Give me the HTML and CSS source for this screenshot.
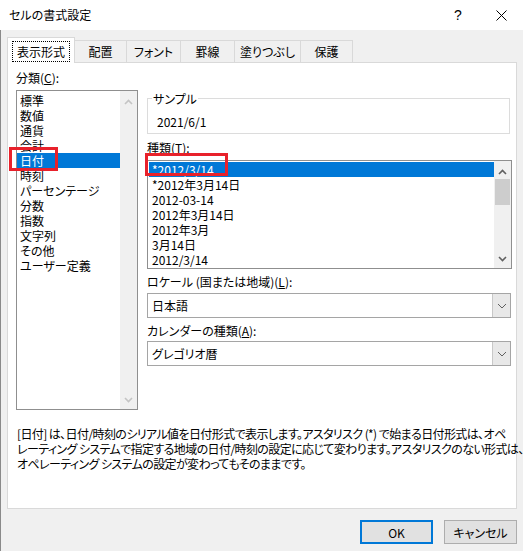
FILE: index.html
```html
<!DOCTYPE html>
<html lang="ja">
<head>
  <meta charset="UTF-8">
  <meta name="viewport" content="width=device-width, initial-scale=1.0">
  <title>セルの書式設定</title>
  <link rel="stylesheet" href="styles.css">
</head>
<body>
  <div class="titlebar">
    <span class="title">セルの書式設定</span>
    <span class="caption-btn help">?</span>
    <span class="caption-btn close">
      <svg width="11" height="11" viewBox="0 0 11 11"><path d="M0.5 0.5 L10.5 10.5 M10.5 0.5 L0.5 10.5" stroke="#000" stroke-width="1" fill="none"/></svg>
    </span>
  </div>

  <div class="dialog">
    <div class="tabs">
      <div class="tab active" style="width: 68px"><span class="focus">表示形式</span></div>
      <div class="tab" style="width: 53px">配置</div>
      <div class="tab" style="width: 55px">フォント</div>
      <div class="tab" style="width: 55px">罫線</div>
      <div class="tab" style="width: 67px">塗りつぶし</div>
      <div class="tab" style="width: 53px">保護</div>
    </div>

    <div class="panel">
      <div class="columns">
        <div class="col-left">
          <div class="label">分類(<u>C</u>):</div>
          <div class="listbox category">
            <ul class="items">
              <li>標準</li>
              <li>数値</li>
              <li>通貨</li>
              <li>会計</li>
              <li class="selected marked">日付</li>
              <li>時刻</li>
              <li>パーセンテージ</li>
              <li>分数</li>
              <li>指数</li>
              <li>文字列</li>
              <li>その他</li>
              <li>ユーザー定義</li>
            </ul>
            <div class="scrollbar disabled">
              <svg class="arrow" width="17" height="18" viewBox="0 0 17 18"><path d="M5 13 L8.5 9.5 L12 13" /></svg>
              <svg class="arrow" width="17" height="18" viewBox="0 0 17 18"><path d="M5 7 L8.5 10.5 L12 7" /></svg>
            </div>
          </div>
        </div>

        <div class="col-right">
          <fieldset class="sample">
            <legend>サンプル</legend>
            <div class="sample-value">2021/6/1</div>
          </fieldset>

          <div class="label type-label">種類(<u>T</u>):</div>
          <div class="listbox formats">
            <ul class="items">
              <li class="selected marked">*2012/3/14</li>
              <li>*2012年3月14日</li>
              <li>2012-03-14</li>
              <li>2012年3月14日</li>
              <li>2012年3月</li>
              <li>3月14日</li>
              <li>2012/3/14</li>
            </ul>
            <div class="scrollbar">
              <svg class="arrow" width="17" height="18" viewBox="0 0 17 18"><path d="M5 13 L8.5 9.5 L12 13" /></svg>
              <div class="thumb"></div>
              <div class="track"></div>
              <svg class="arrow" width="17" height="18" viewBox="0 0 17 18"><path d="M5 7 L8.5 10.5 L12 7" /></svg>
            </div>
          </div>

          <div class="label field-label">ロケール (国または地域)(<u>L</u>):</div>
          <div class="combo">
            <span class="combo-text">日本語</span>
            <span class="combo-btn">
              <svg width="10" height="6" viewBox="0 0 10 6"><path d="M1 1 L5 5 L9 1" /></svg>
            </span>
          </div>

          <div class="label field-label">カレンダーの種類(<u>A</u>):</div>
          <div class="combo">
            <span class="combo-text">グレゴリオ暦</span>
            <span class="combo-btn">
              <svg width="10" height="6" viewBox="0 0 10 6"><path d="M1 1 L5 5 L9 1" /></svg>
            </span>
          </div>
        </div>
      </div>

      <p class="desc">[日付] は、日付/時刻のシリアル値を日付形式で表示します。アスタリスク (*) で始まる日付形式は、オペ<br>レーティング システムで指定する地域の日付/時刻の設定に応じて変わります。アスタリスクのない形式は、<br>オペレーティング システムの設定が変わってもそのままです。</p>
    </div>

    <div class="buttons">
      <button class="btn default">OK</button>
      <button class="btn">キャンセル</button>
    </div>
  </div>
</body>
</html>
```

FILE: styles.css
```css
body {
  margin: 0;
  width: 523px;
  height: 551px;
  overflow: hidden;
  background-color: #f0f0f0;
  font-family: "Noto Sans CJK JP", sans-serif;
  font-size: 12px;
  font-feature-settings: "palt";
  color: #000000;
}

.titlebar {
  height: 30px;
  background-color: #ffffff;
  display: flex;
  align-items: center;
  padding-left: 9px;
}

.title {
  flex: 1;
  line-height: 30px;
}

.caption-btn {
  width: 44px;
  height: 30px;
  display: flex;
  justify-content: center;
  align-items: center;
}

.help {
  font-family: "Liberation Sans", sans-serif;
  font-size: 14px;
}

.close {
  width: 43px;
}

.dialog {
  height: 521px;
  box-sizing: border-box;
  border-left: 1px solid #8a8a8a;
  padding: 7px 6px 0 6px;
}

/* tab strip */
.tabs {
  display: flex;
  align-items: flex-end;
  height: 25px;
}

.tab {
  height: 22px;
  box-sizing: border-box;
  border: 1px solid #d9d9d9;
  border-bottom: none;
  margin-left: -1px;
  display: flex;
  justify-content: center;
  align-items: center;
  background-color: #f0f0f0;
  line-height: 15px;
}

.tab.active {
  margin-left: 0;
  height: 26px;
  margin-bottom: -1px;
  background-color: #ffffff;
  position: relative;
  z-index: 2;
}

.focus {
  display: block;
  border: 1px dotted #000000;
  padding: 2px 4px;
  margin-top: 1px;
}

.panel {
  height: 447px;
  box-sizing: border-box;
  border: 1px solid #d9d9d9;
  background-color: #ffffff;
}

.columns {
  display: flex;
  gap: 9px;
  padding: 7px 0 0 8px;
}

.col-left {
  width: 122px;
}

.col-right {
  width: 365px;
  padding-top: 21px;
  display: flex;
  flex-direction: column;
}

.label {
  line-height: 15px;
  height: 15px;
  white-space: nowrap;
}

/* list boxes */
.listbox {
  display: flex;
  box-sizing: border-box;
  border: 1px solid #8f8f8f;
  background-color: #ffffff;
}

.category {
  margin-top: 5px;
  height: 320px;
}

.formats {
  margin-top: 5px;
  height: 109px;
}

.items {
  flex: 1;
  list-style: none;
  margin: 0;
  padding: 2px 0 0 0;
}

.formats .items {
  padding: 1px 0 0 1px;
}

.items li {
  height: 15px;
  line-height: 15px;
  padding-left: 3px;
  white-space: nowrap;
}

.items li.selected {
  background-color: #0078d7;
  color: #ffffff;
}

.items li.marked {
  position: relative;
}

.items li.marked::after {
  content: "";
  position: absolute;
  box-sizing: border-box;
  border: 3px solid #e8212b;
}

.category li.marked::after {
  left: -8px;
  top: -6px;
  width: 49px;
  height: 24px;
}

.formats li.marked::after {
  left: -4px;
  top: -9px;
  width: 83px;
  height: 23px;
}

.scrollbar {
  width: 17px;
  background-color: #f0f0f0;
  display: flex;
  flex-direction: column;
  justify-content: space-between;
}

.arrow path {
  fill: none;
  stroke: #606060;
  stroke-width: 1.6;
}

.scrollbar.disabled .arrow path {
  stroke: #c4c4c4;
}

.thumb {
  height: 26px;
  margin: 0 1px;
  background-color: #cdcdcd;
}

.track {
  flex: 1;
}

/* sample box */
.sample {
  margin: 0;
  padding: 0 9px 4px 9px;
  width: 363px;
  box-sizing: border-box;
  border: 1px solid #dcdcdc;
}

.sample legend {
  padding: 0 1px;
  margin-left: -5px;
  line-height: 15px;
}

.sample-value {
  margin-top: 8px;
  line-height: 15px;
}

.type-label {
  margin-top: 6px;
}

.field-label {
  margin-top: 5px;
}

/* drop-down boxes */
.combo {
  margin-top: 4px;
  height: 25px;
  width: 364px;
  box-sizing: border-box;
  border: 1px solid #a5a5a5;
  display: flex;
  background-color: #ffffff;
}

.field-label + .combo + .field-label + .combo {
  margin-top: 3px;
}

.combo-text {
  flex: 1;
  line-height: 23px;
  padding-left: 4px;
}

.combo-btn {
  width: 17px;
  border-left: 1px solid #c8c8c8;
  background-color: #e8e8e8;
  display: flex;
  justify-content: center;
  align-items: center;
}

.combo-btn path {
  fill: none;
  stroke: #606060;
  stroke-width: 1;
}

.desc {
  margin: 16px 0 0 9px;
  line-height: 15px;
  letter-spacing: -0.6px;
  white-space: nowrap;
}

/* bottom buttons */
.buttons {
  display: flex;
  justify-content: flex-end;
  gap: 11px;
  margin-top: 11px;
}

.btn {
  width: 73px;
  height: 24px;
  box-sizing: border-box;
  border: 1px solid #adadad;
  background-color: #e1e1e1;
  font-family: "Noto Sans CJK JP", sans-serif;
  font-size: 12px;
  font-feature-settings: "palt";
  color: #000000;
  padding: 0;
}

.btn.default {
  border: 2px solid #0078d7;
}
```
